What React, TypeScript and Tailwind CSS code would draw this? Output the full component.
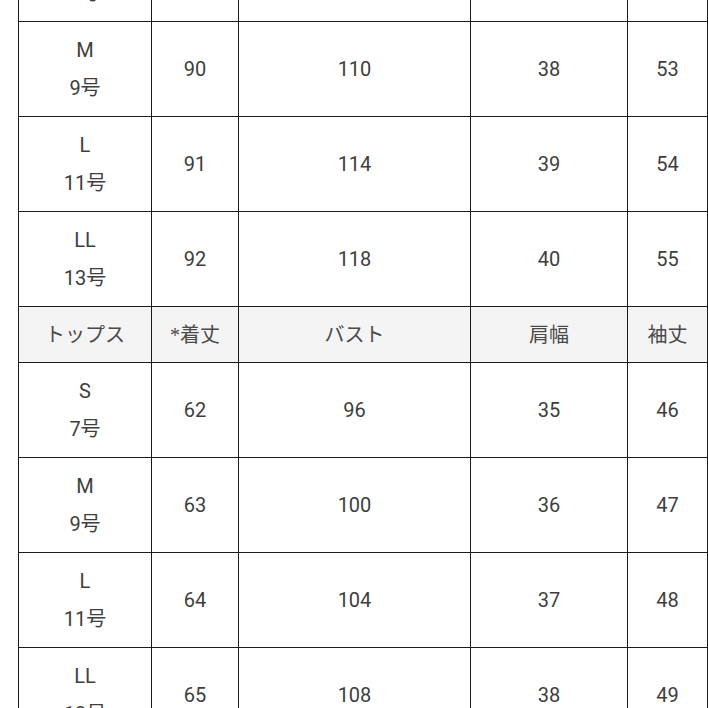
const ROWS_TOP: [string, string, number[]][] = [
  ["S", "7号", [89, 106, 37, 52]],
  ["M", "9号", [90, 110, 38, 53]],
  ["L", "11号", [91, 114, 39, 54]],
  ["LL", "13号", [92, 118, 40, 55]],
];

const ROWS_TOPS: [string, string, number[]][] = [
  ["S", "7号", [62, 96, 35, 46]],
  ["M", "9号", [63, 100, 36, 47]],
  ["L", "11号", [64, 104, 37, 48]],
  ["LL", "13号", [65, 108, 38, 49]],
];

const HEAD = ["トップス", "*着丈", "バスト", "肩幅", "袖丈"];

const cell = "border-[1.5px] border-[#1a1a1a] text-center align-middle";

function SizeRow({ size, no, vals }: { size: string; no: string; vals: number[] }) {
  return (
    <tr className="h-[95px]">
      <td className={cell}>
        <div className="flex flex-col items-center gap-[10px] leading-[28px]">
          <span>{size}</span>
          <span>{no}</span>
        </div>
      </td>
      {vals.map((v, i) => (
        <td key={i} className={cell}>{v}</td>
      ))}
    </tr>
  );
}

export default function App() {
  return (
    <div className="h-[708px] w-[708px] overflow-hidden bg-white">
      <div className="mt-[-74px] pl-[18px] pr-[1px]">
        <table
          className="w-[689px] table-fixed border-collapse text-[20px] text-[#3e3e3e]"
          style={{ fontFamily: "Roboto, 'Noto Sans CJK JP', sans-serif" }}
        >
          <colgroup>
            <col className="w-[133px]" />
            <col className="w-[87px]" />
            <col className="w-[232px]" />
            <col className="w-[157px]" />
            <col className="w-[80px]" />
          </colgroup>
          <tbody>
            {ROWS_TOP.map(([s, n, v]) => (
              <SizeRow key={"a" + s} size={s} no={n} vals={v} />
            ))}
            <tr className="h-[56px] bg-[#f4f4f4]">
              {HEAD.map((h) => (
                <td
                  key={h}
                  className={cell + " text-[20px] text-[#4a4a4a]"}
                  style={{ fontFamily: "'Liberation Serif', 'Noto Sans CJK JP', serif" }}
                >
                  {h}
                </td>
              ))}
            </tr>
            {ROWS_TOPS.map(([s, n, v]) => (
              <SizeRow key={"b" + s} size={s} no={n} vals={v} />
            ))}
          </tbody>
        </table>
      </div>
    </div>
  );
}
